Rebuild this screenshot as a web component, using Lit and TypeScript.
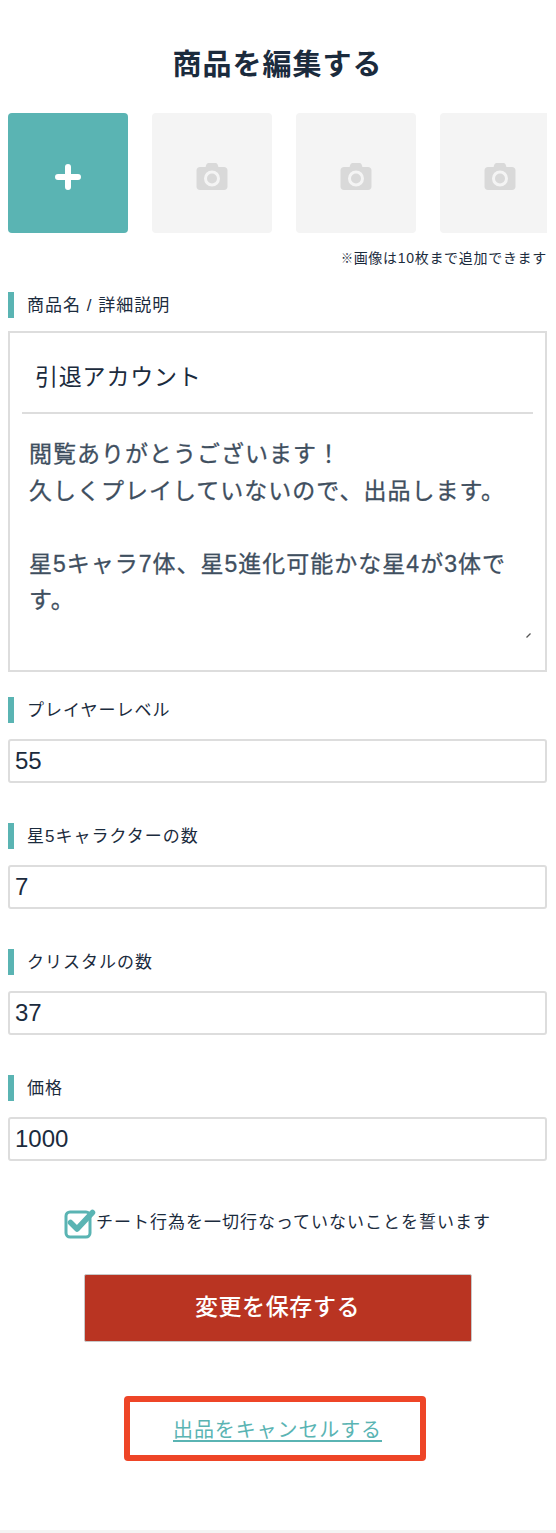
import { LitElement, html, css, svg } from "lit";
import { customElement } from "lit/decorators.js";

const camera = svg`<svg class="cam" width="34" height="30" viewBox="0 0 34 30"><path fill="#d9d9d9" fill-rule="evenodd" d="M11 3.5C11.6 1.6 12.8 1 14 1h6c1.4 0 2.4.6 3 2.5l.4 1.5H29c2 0 3.500 1.500 3.500 3.500v16c0 2-1.500 3.500-3.500 3.500H5c-2 0-3.500-1.500-3.500-3.500v-16C1.500 6.500 3 5 5 5h5.600zM17 8.500a8 8 0 1 0 0 16 8 8 0 0 0 0-16zm0 3a5 5 0 1 1 0 10 5 5 0 0 1 0-10z"/></svg>`;

const FIELDS = [
  { label: "プレイヤーレベル", value: "55" },
  { label: "星5キャラクターの数", value: "7" },
  { label: "クリスタルの数", value: "37" },
  { label: "価格", value: "1000" },
];

const BODY = "閲覧ありがとうございます！\n久しくプレイしていないので、出品します。\n\n星5キャラ7体、星5進化可能かな星4が3体です。";

@customElement("app-root")
export class AppRoot extends LitElement {
  static styles = css`
    :host {
      display: block;
      height: 1533px;
      box-sizing: border-box;
      background: #fff;
      color: #1b2b3d;
      font-family: "Liberation Sans", "Noto Sans CJK JP", sans-serif;
      overflow: hidden;
      position: relative;
    }
    * { box-sizing: border-box; }
    .page { padding: 45px 9px 0 8px; }
    h1 {
      margin: 0;
      font-size: 29px;
      line-height: 41px;
      font-weight: 700;
      letter-spacing: 1px;
      text-align: center;
    }
    .tiles {
      display: flex;
      gap: 24px;
      margin-top: 27px;
      overflow: hidden;
    }
    .tile {
      flex: 0 0 120px;
      height: 120px;
      border-radius: 4px;
      background: #f4f4f4;
      display: flex;
      align-items: center;
      justify-content: center;
    }
    .tile.add { background: #5ab4b3; }
    .cam { margin-top: 7px; }
    .plus { margin-top: 7px; }
    .note {
      margin-top: 13px;
      padding-top: 2px;
      height: 20px;
      font-size: 14px;
      line-height: 20px;
      letter-spacing: 0.7px;
      text-align: right;
      white-space: nowrap;
    }
    .mark { font-size: 12px; font-weight: 700; }
    .label {
      display: flex;
      align-items: center;
      height: 26px;
      border-left: 6px solid #5ab4b3;
      padding: 0 0 4px 13px;
      font-size: 17px;
      letter-spacing: 1px;
    }
    .label.first { margin-top: 26px; }
    .label.next { margin-top: 25px; }
    .box {
      position: relative;
      margin-top: 13px;
      height: 341px;
      border: 2px solid #ddd;
      padding: 0 12px;
      display: flex;
      flex-direction: column;
    }
    .name {
      height: 81px;
      border-bottom: 2px solid #ddd;
      padding: 25px 0 0 13px;
      font-size: 23px;
      line-height: 38px;
      letter-spacing: 0.8px;
    }
    textarea {
      display: block;
      width: 100%;
      height: 226px;
      margin: 0;
      border: 0;
      outline: 0;
      padding: 22px 6px 0 7px;
      font: inherit;
      font-size: 23px;
      line-height: 36.5px;
      letter-spacing: 1px;
      color: #3f4f5f;
      -webkit-text-stroke: 0.3px #3f4f5f;
      background: transparent;
      resize: none;
      overflow: hidden;
    }
    .grip {
      position: absolute;
      right: 14px;
      bottom: 32px;
    }
    .field {
      display: block;
      width: 100%;
      height: 44px;
      margin: 16px 0 40px;
      border: 2px solid #ddd;
      border-radius: 3px;
      padding: 0 5px;
      font: inherit;
      font-size: 24px;
      color: #1b2b3d;
      background: #fff;
      outline: 0;
    }
    .field.last { margin-bottom: 0; }
    .agree {
      display: flex;
      justify-content: center;
      align-items: center;
      margin: 47px 0 0;
      height: 30px;
      font-size: 17px;
      letter-spacing: 1px;
    }
    .agree span { padding-bottom: 5px; }
    .agree svg { flex: none; margin-top: 2px; }
    .save {
      display: block;
      width: 388px;
      height: 68px;
      margin: 36px auto 0;
      padding: 0 0 6px;
      border: 1px solid #c8c8c8;
      border-radius: 2px;
      background: #b93422;
      color: #fff;
      font: inherit;
      font-size: 23px;
      font-weight: 500;
      letter-spacing: 0.6px;
    }
    .cancel-wrap { display: flex; justify-content: center; margin-top: 54px; }
    .cancel {
      width: 302px;
      height: 65px;
      margin-right: 6px;
      border: 6px solid #ee4527;
      border-radius: 4px;
      padding-left: 6px;
      display: flex;
      align-items: center;
      justify-content: center;
      font-size: 20px;
      letter-spacing: 0.9px;
      color: #5ab4b3;
      text-decoration: underline;
      text-underline-offset: 3px;
    }
    .foot {
      position: absolute;
      left: 0;
      right: 0;
      bottom: 0;
      height: 3px;
      background: #f4f4f4;
    }
  `;

  render() {
    return html`
      <div class="page">
        <h1>商品を編集する</h1>
        <div class="tiles">
          <div class="tile add">
            <svg class="plus" width="26" height="26" viewBox="0 0 26 26"><path d="M13 3v20M3 13h20" stroke="#fff" stroke-width="6" stroke-linecap="round"/></svg>
          </div>
          ${[0, 1, 2].map(() => html`<div class="tile">${camera}</div>`)}
        </div>
        <div class="note"><span class="mark">※</span>画像は10枚まで追加できます</div>
        <div class="label first">商品名 / 詳細説明</div>
        <div class="box">
          <div class="name">引退アカウント</div>
          <textarea .value=${BODY}></textarea>
          <svg class="grip" width="5" height="5" viewBox="0 0 5 5"><path d="M0.500 4.500L4.500 0.500" stroke="#555" stroke-width="1.200"/></svg>
        </div>
        ${FIELDS.map(
          (f, i) => html`
            <div class="label ${i === 0 ? "next" : ""}">${f.label}</div>
            <input class="field ${i === FIELDS.length - 1 ? "last" : ""}" .value=${f.value} />
          `
        )}
        <div class="agree">
          <svg width="32" height="30" viewBox="0 0 32 30">
            <rect x="2" y="3" width="24" height="25" rx="4" fill="none" stroke="#5ab4b3" stroke-width="3"/>
            <path d="M6.500 13.500l6.500 6.500L28.500 3.500" fill="none" stroke="#5ab4b3" stroke-width="5.500" stroke-linecap="round" stroke-linejoin="round"/>
          </svg>
          <span>チート行為を一切行なっていないことを誓います</span>
        </div>
        <button class="save">変更を保存する</button>
        <div class="cancel-wrap"><a class="cancel">出品をキャンセルする</a></div>
      </div>
      <div class="foot"></div>
    `;
  }
}
